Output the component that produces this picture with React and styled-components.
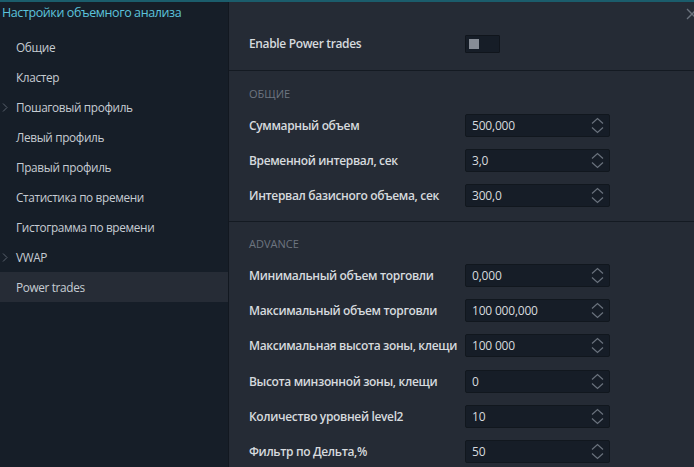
import React from "react";
import styled, { createGlobalStyle } from "styled-components";

const Global = createGlobalStyle`
  html, body { margin: 0; padding: 0; background: #252b35; overflow: hidden; }
  body { font-family: "Open Sans", "Noto Sans", sans-serif; }
  * { box-sizing: border-box; }
`;

const Window = styled.div`
  position: relative;
  width: 694px;
  height: 467px;
  border-top: 2px solid #1b5d6c;
  display: flex;
  overflow: hidden;
  background: #252b35;
`;

const Sidebar = styled.div`
  width: 229px;
  flex: none;
  background: #161e28;
  border-right: 1px solid #121820;
  display: flex;
  flex-direction: column;
`;

const Title = styled.div`
  height: 30px;
  padding: 2px 0 0 2px;
  line-height: 17px;
  font-size: 12.5px;
  color: #5cc3dc;
  letter-spacing: -0.4px;
`;

const NavItem = styled.div`
  position: relative;
  height: 30px;
  display: flex;
  align-items: center;
  padding-left: 16px;
  font-size: 11.8px;
  letter-spacing: -0.35px;
  color: #c6ccd3;
  background: ${(p) => (p.$active ? "#262c36" : "transparent")};
`;

const Chevron = styled.svg`
  position: absolute;
  left: 2px;
  top: 11px;
`;

const Main = styled.div`
  flex: 1;
  display: flex;
  flex-direction: column;
`;

const Section = styled.div`
  padding: ${(p) => p.$pad};
  border-bottom: ${(p) => (p.$line ? "1px solid #141a22" : "none")};
`;

const Heading = styled.div`
  height: 18px;
  display: flex;
  align-items: center;
  padding-left: 20px;
  margin-bottom: 6px;
  font-size: 11px;
  color: #6d7580;
  text-transform: uppercase;
`;

const Row = styled.div`
  height: ${(p) => p.$h || 35}px;
  display: flex;
  align-items: center;
  padding-left: 20px;
`;

const Label = styled.div`
  width: 216px;
  flex: none;
  font-size: 12px;
  font-weight: 600;
  color: #d6dade;
  white-space: nowrap;
  letter-spacing: -0.35px;
`;

const Toggle = styled.div`
  width: 35px;
  height: 18px;
  background: #161d27;
  border: 1px solid #10151c;
  border-radius: 1px;
  display: flex;
  align-items: center;
  padding-left: 3px;
`;

const Knob = styled.div`
  width: 10px;
  height: 10px;
  background: #878d96;
`;

const Input = styled.div`
  width: 145px;
  height: 23px;
  background: #161d27;
  border: 1px solid #11171e;
  border-radius: 2px;
  display: flex;
  align-items: center;
  justify-content: space-between;
  padding: 0 5px 0 6px;
  font-size: 12px;
  letter-spacing: -0.2px;
  color: #d6dade;
`;

const Spinner = styled.svg`
  flex: none;
`;

const Close = styled.svg`
  position: absolute;
  right: -4px;
  top: 6px;
`;

const nav = [
  ["Общие"],
  ["Кластер"],
  ["Пошаговый профиль", true],
  ["Левый профиль"],
  ["Правый профиль"],
  ["Статистика по времени"],
  ["Гистограмма по времени"],
  ["VWAP", true],
  ["Power trades", false, true],
];

const general = [
  ["Суммарный объем", "500,000"],
  ["Временной интервал, сек", "3,0"],
  ["Интервал базисного объема, сек", "300,0"],
];

const advance = [
  ["Минимальный объем торговли", "0,000"],
  ["Максимальный объем торговли", "100 000,000"],
  ["Максимальная высота зоны, клещи", "100 000"],
  ["Высота минзонной зоны, клещи", "0"],
  ["Количество уровней level2", "10"],
  ["Фильтр по Дельта,%", "50"],
];

const Spin = () => (
  <Spinner width="13" height="17" viewBox="0 0 13 17">
    <polyline points="1,6.5 6.5,1.5 12,6.5" fill="none" stroke="#6a727d" strokeWidth="1.2" />
    <polyline points="1,10.5 6.5,15.5 12,10.5" fill="none" stroke="#6a727d" strokeWidth="1.2" />
  </Spinner>
);

const Field = ({ label, value, h }) => (
  <Row $h={h}>
    <Label>{label}</Label>
    <Input>
      <span>{value}</span>
      <Spin />
    </Input>
  </Row>
);

export default function App() {
  return (
    <>
      <Global />
      <Window>
        <Sidebar>
          <Title>Настройки объемного анализа</Title>
          {nav.map(([t, chev, active]) => (
            <NavItem key={t} $active={active}>
              {chev && (
                <Chevron width="6" height="9" viewBox="0 0 6 9">
                  <polyline points="1,0.5 5,4.5 1,8.5" fill="none" stroke="#5b636e" strokeWidth="1" />
                </Chevron>
              )}
              {t}
            </NavItem>
          ))}
        </Sidebar>
        <Main>
          <Section $pad="24px 0 9px 0" $line>
            <Row>
              <Label>Enable Power trades</Label>
              <Toggle>
                <Knob />
              </Toggle>
            </Row>
          </Section>
          <Section $pad="13px 0 8px 0" $line>
            <Heading>Общие</Heading>
            {general.map(([l, v]) => (
              <Field key={l} label={l} value={v} />
            ))}
          </Section>
          <Section $pad="12px 0 0 0">
            <Heading>Advance</Heading>
            {advance.map(([l, v]) => (
              <Field key={l} label={l} value={v} h={35.2} />
            ))}
          </Section>
        </Main>
        <Close width="12" height="12" viewBox="0 0 12 12">
          <line x1="1" y1="1" x2="11" y2="11" stroke="#6a727d" strokeWidth="1.3" />
          <line x1="11" y1="1" x2="1" y2="11" stroke="#6a727d" strokeWidth="1.3" />
        </Close>
      </Window>
    </>
  );
}
